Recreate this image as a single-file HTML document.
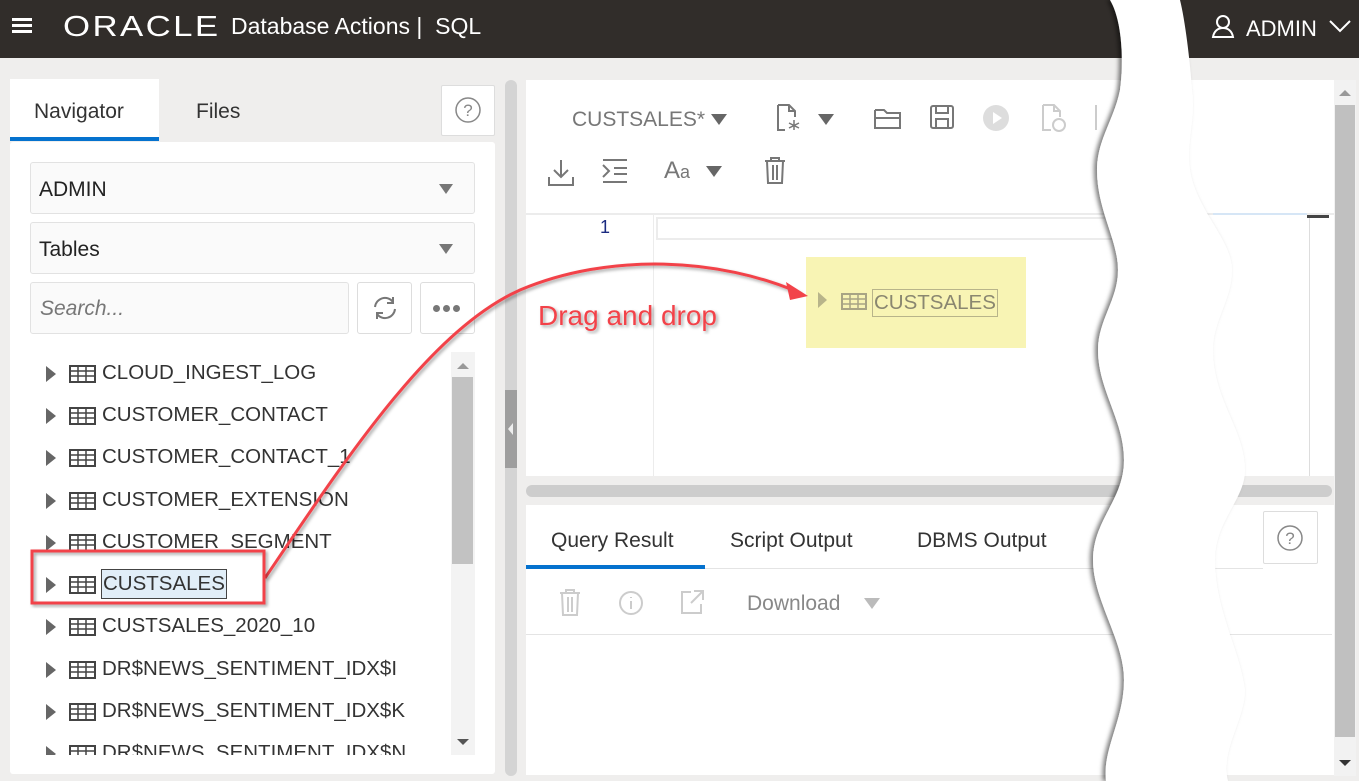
<!DOCTYPE html>
<html><head><meta charset="utf-8"><style>
*{margin:0;padding:0;box-sizing:border-box}
body{width:1359px;height:781px;overflow:hidden;background:#efeeed;font-family:"Liberation Sans",sans-serif;position:relative}
.abs{position:absolute}
.hdr{left:0;top:0;width:1359px;height:58px;background:#312d2a;color:#fff}
.box{background:#fafafa;border:1px solid #e2e2e2;border-radius:3px}
.row{position:absolute;left:44px;height:30px;font-size:20.5px;color:#333;white-space:nowrap}
.row .tri{position:absolute;left:2px;top:6px;width:0;height:0;border-left:10px solid #666;border-top:8px solid transparent;border-bottom:8px solid transparent}
.row .ic{position:absolute;left:25px;top:5px}
.row .t{position:absolute;left:58px;top:1px}
.tab{position:absolute;font-size:21px;color:#333}
</style></head><body>
<div class="abs hdr">
 <div class="abs" style="left:12px;top:18px;width:20px;height:3px;background:#fff;box-shadow:0 6px 0 #fff,0 12px 0 #fff"></div>
 <div class="abs" style="left:63px;top:11px;font-size:29px;letter-spacing:2px;transform:scaleX(1.2);transform-origin:left">ORACLE</div>
 <div class="abs" style="left:231px;top:13px;font-size:23px">Database Actions |&nbsp; SQL</div>
 <svg class="abs" style="left:1211px;top:14px" width="24" height="24" viewBox="0 0 24 24" fill="none" stroke="#fff" stroke-width="2"><circle cx="12" cy="8" r="6"/><path d="M2 23c1-6 5-9 10-9s9 3 10 9z"/></svg>
 <div class="abs" style="left:1246px;top:16px;font-size:22px">ADMIN</div>
 <svg class="abs" style="left:1328px;top:18px" width="24" height="16"><path d="M2 3l10 10 10-10" stroke="#fff" stroke-width="2" fill="none"/></svg>
</div>

<!-- left panel -->
<div class="abs" style="left:10px;top:79px;width:149px;height:62px;background:#fff"></div>
<div class="abs" style="left:10px;top:137px;width:149px;height:4px;background:#0572ce"></div>
<div class="tab" style="left:34px;top:100px">Navigator</div>
<div class="tab" style="left:196px;top:100px">Files</div>
<div class="abs" style="left:441px;top:85px;width:54px;height:51px;background:#fff;border:1px solid #ddd;border-radius:2px"></div>
<svg class="abs" style="left:454px;top:96px" width="28" height="28"><circle cx="14" cy="14" r="12" stroke="#888" stroke-width="1.5" fill="none"/><text x="14" y="20" font-size="17" text-anchor="middle" fill="#888" font-family="Liberation Sans">?</text></svg>
<div class="abs" style="left:10px;top:142px;width:485px;height:632px;background:#fff;border-radius:3px"></div>
<div class="abs box" style="left:30px;top:162px;width:445px;height:52px"></div>
<div class="abs" style="left:39px;top:178px;font-size:21px;color:#222">ADMIN</div>
<div class="abs" style="left:439px;top:184px;border-top:10px solid #777;border-left:7px solid transparent;border-right:7px solid transparent"></div>
<div class="abs box" style="left:30px;top:222px;width:445px;height:52px"></div>
<div class="abs" style="left:39px;top:238px;font-size:21px;color:#222">Tables</div>
<div class="abs" style="left:439px;top:244px;border-top:10px solid #777;border-left:7px solid transparent;border-right:7px solid transparent"></div>
<div class="abs box" style="left:30px;top:282px;width:319px;height:52px"></div>
<div class="abs" style="left:40px;top:297px;font-size:21px;color:#777;font-style:italic">Search...</div>
<div class="abs" style="left:357px;top:282px;width:55px;height:52px;background:#fff;border:1px solid #ddd;border-radius:3px"></div>
<svg class="abs" style="left:371px;top:295px" width="28" height="26" fill="none" stroke="#777" stroke-width="2"><path d="M4 12a10 10 0 0 1 18-5M24 14a10 10 0 0 1-18 5"/><path d="M22 2v6h-6M6 24v-6h6" /></svg>
<div class="abs" style="left:420px;top:282px;width:55px;height:52px;background:#fff;border:1px solid #ddd;border-radius:3px"></div>
<div class="abs" style="left:433px;top:305px;width:7px;height:7px;border-radius:50%;background:#777;box-shadow:10px 0 0 #777,20px 0 0 #777"></div>

<div class="abs" style="left:30px;top:352px;width:420px;height:403px;overflow:hidden">
<div style="position:relative;left:-30px;top:-349px">
<div class="row" style="top:357px"><span class="tri"></span><svg class="ic" width="27" height="18"><rect x="1" y="1" width="25" height="16" fill="none" stroke="#444" stroke-width="2"/><path d="M1 6h25M1 11h25M9 1v16M17 1v16" stroke="#444" stroke-width="1.5"/></svg><span class="t">CLOUD_INGEST_LOG</span></div>
<div class="row" style="top:399px"><span class="tri"></span><svg class="ic" width="27" height="18"><rect x="1" y="1" width="25" height="16" fill="none" stroke="#444" stroke-width="2"/><path d="M1 6h25M1 11h25M9 1v16M17 1v16" stroke="#444" stroke-width="1.5"/></svg><span class="t">CUSTOMER_CONTACT</span></div>
<div class="row" style="top:441px"><span class="tri"></span><svg class="ic" width="27" height="18"><rect x="1" y="1" width="25" height="16" fill="none" stroke="#444" stroke-width="2"/><path d="M1 6h25M1 11h25M9 1v16M17 1v16" stroke="#444" stroke-width="1.5"/></svg><span class="t">CUSTOMER_CONTACT_1</span></div>
<div class="row" style="top:484px"><span class="tri"></span><svg class="ic" width="27" height="18"><rect x="1" y="1" width="25" height="16" fill="none" stroke="#444" stroke-width="2"/><path d="M1 6h25M1 11h25M9 1v16M17 1v16" stroke="#444" stroke-width="1.5"/></svg><span class="t">CUSTOMER_EXTENSION</span></div>
<div class="row" style="top:526px"><span class="tri"></span><svg class="ic" width="27" height="18"><rect x="1" y="1" width="25" height="16" fill="none" stroke="#444" stroke-width="2"/><path d="M1 6h25M1 11h25M9 1v16M17 1v16" stroke="#444" stroke-width="1.5"/></svg><span class="t">CUSTOMER_SEGMENT</span></div>
<div class="row" style="top:568px"><span class="tri"></span><svg class="ic" width="27" height="18"><rect x="1" y="1" width="25" height="16" fill="none" stroke="#444" stroke-width="2"/><path d="M1 6h25M1 11h25M9 1v16M17 1v16" stroke="#444" stroke-width="1.5"/></svg><span class="t" style="left:57px;top:-2px;padding:2px 1px;background:#e1eef8;border:1px solid #444">CUSTSALES</span></div>
<div class="row" style="top:610px"><span class="tri"></span><svg class="ic" width="27" height="18"><rect x="1" y="1" width="25" height="16" fill="none" stroke="#444" stroke-width="2"/><path d="M1 6h25M1 11h25M9 1v16M17 1v16" stroke="#444" stroke-width="1.5"/></svg><span class="t">CUSTSALES_2020_10</span></div>
<div class="row" style="top:653px"><span class="tri"></span><svg class="ic" width="27" height="18"><rect x="1" y="1" width="25" height="16" fill="none" stroke="#444" stroke-width="2"/><path d="M1 6h25M1 11h25M9 1v16M17 1v16" stroke="#444" stroke-width="1.5"/></svg><span class="t">DR$NEWS_SENTIMENT_IDX$I</span></div>
<div class="row" style="top:695px"><span class="tri"></span><svg class="ic" width="27" height="18"><rect x="1" y="1" width="25" height="16" fill="none" stroke="#444" stroke-width="2"/><path d="M1 6h25M1 11h25M9 1v16M17 1v16" stroke="#444" stroke-width="1.5"/></svg><span class="t">DR$NEWS_SENTIMENT_IDX$K</span></div>
<div class="row" style="top:737px"><span class="tri"></span><svg class="ic" width="27" height="18"><rect x="1" y="1" width="25" height="16" fill="none" stroke="#444" stroke-width="2"/><path d="M1 6h25M1 11h25M9 1v16M17 1v16" stroke="#444" stroke-width="1.5"/></svg><span class="t">DR$NEWS_SENTIMENT_IDX$N</span></div>
</div></div>
<div class="abs" style="left:451px;top:352px;width:24px;height:403px;background:#f3f3f3"></div>
<div class="abs" style="left:452px;top:377px;width:21px;height:187px;background:#c2c2c2"></div>
<div class="abs" style="left:457px;top:363px;border-bottom:6px solid #999;border-left:6px solid transparent;border-right:6px solid transparent"></div>
<div class="abs" style="left:457px;top:739px;border-top:6px solid #555;border-left:6px solid transparent;border-right:6px solid transparent"></div>

<!-- splitter -->
<div class="abs" style="left:505px;top:80px;width:12px;height:696px;background:#d4d4d4;border-radius:6px"></div>
<div class="abs" style="left:505px;top:390px;width:12px;height:78px;background:#9e9e9e"></div>
<div class="abs" style="left:508px;top:423px;border-right:5px solid #eee;border-top:6px solid transparent;border-bottom:6px solid transparent"></div>

<!-- right editor panel -->
<div class="abs" style="left:526px;top:80px;width:808px;height:396px;background:#fff"></div>
<div class="abs" style="left:572px;top:108px;font-size:21px;color:#777">CUSTSALES*</div>
<div class="abs" style="left:711px;top:114px;border-top:11px solid #666;border-left:8px solid transparent;border-right:8px solid transparent"></div>
<svg class="abs" style="left:775px;top:103px" width="30" height="30" fill="none" stroke="#777" stroke-width="2"><path d="M3 2h11l6 6v6M14 2v6h6M3 2v25h7"/><path d="M19 17v10M14 20l10 5M24 20l-10 5" stroke-width="1.5"/></svg>
<div class="abs" style="left:818px;top:114px;border-top:11px solid #666;border-left:8px solid transparent;border-right:8px solid transparent"></div>
<svg class="abs" style="left:873px;top:106px" width="30" height="24" fill="none" stroke="#777" stroke-width="2"><path d="M2 4h9l3 3h13v5M2 4v18h25V12H2"/></svg>
<svg class="abs" style="left:929px;top:104px" width="26" height="26" fill="none" stroke="#777" stroke-width="2"><rect x="2" y="2" width="22" height="22" rx="2"/><path d="M7 2v7h12V2M7 24v-9h12v9"/></svg>
<svg class="abs" style="left:982px;top:104px" width="28" height="28"><circle cx="14" cy="14" r="13" fill="#ddd"/><path d="M11 8l9 6-9 6z" fill="#fff"/></svg>
<svg class="abs" style="left:1040px;top:103px" width="28" height="30" fill="none" stroke="#ccc" stroke-width="2"><path d="M3 2h11l6 6v6M14 2v6h6M3 2v25h8"/><circle cx="19" cy="22" r="6"/></svg>
<svg class="abs" style="left:1093px;top:103px" width="10" height="30" fill="none" stroke="#ccc" stroke-width="2"><path d="M3 2v25"/></svg>
<svg class="abs" style="left:546px;top:157px" width="30" height="30" fill="none" stroke="#777" stroke-width="2"><path d="M15 3v17M8 13l7 7 7-7M3 20v8h24v-8"/></svg>
<svg class="abs" style="left:600px;top:158px" width="28" height="26" fill="none" stroke="#777" stroke-width="2"><path d="M3 2h24M3 24h24M14 10h13M14 16h13M3 7l6 6-6 6"/></svg>
<div class="abs" style="left:664px;top:157px;font-size:24px;color:#777">A<span style="font-size:18px">a</span></div>
<div class="abs" style="left:706px;top:166px;border-top:11px solid #666;border-left:8px solid transparent;border-right:8px solid transparent"></div>
<svg class="abs" style="left:763px;top:156px" width="24" height="30" fill="none" stroke="#777" stroke-width="2"><path d="M2 5h20M8 5V2h8v3M4 5l1 22h14l1-22M10 9v15M14 9v15"/></svg>
<div class="abs" style="left:526px;top:213px;width:808px;height:2px;background:#ececec"></div>
<div class="abs" style="left:1213px;top:213px;width:94px;height:2px;background:#d6e6f6"></div>
<div class="abs" style="left:653px;top:215px;width:1px;height:261px;background:#ececec"></div>
<div class="abs" style="left:600px;top:217px;font-size:18px;color:#1a2a80">1</div>
<div class="abs" style="left:656px;top:217px;width:550px;height:23px;border:2px solid #ececec"></div>
<div class="abs" style="left:1307px;top:215px;width:22px;height:3px;background:#444"></div>
<div class="abs" style="left:1309px;top:218px;width:1px;height:258px;background:#ddd"></div>

<!-- drop target -->
<div class="abs" style="left:806px;top:257px;width:220px;height:91px;background:#f8f4b4"></div>
<div class="abs" style="left:818px;top:292px;border-left:9px solid #b8b48a;border-top:8px solid transparent;border-bottom:8px solid transparent"></div>
<svg class="abs" style="left:841px;top:293px" width="26" height="18"><rect x="1" y="1" width="24" height="15" fill="none" stroke="#a8a484" stroke-width="2"/><path d="M1 6h24M1 11h24M9 1v15M17 1v15" stroke="#a8a484" stroke-width="1.5"/></svg>
<div class="abs" style="left:872px;top:289px;padding:1px 1px;border:1px solid #b8b48a;font-size:20.5px;color:#8a8770">CUSTSALES</div>

<!-- h splitter -->
<div class="abs" style="left:526px;top:485px;width:806px;height:12px;background:#cdcdcd;border-radius:6px"></div>

<!-- bottom panel -->
<div class="abs" style="left:526px;top:505px;width:808px;height:270px;background:#fff"></div>
<div class="tab" style="left:551px;top:529px">Query Result</div>
<div class="tab" style="left:730px;top:529px">Script Output</div>
<div class="tab" style="left:917px;top:529px">DBMS Output</div>
<div class="abs" style="left:526px;top:565px;width:179px;height:4px;background:#0572ce"></div>
<div class="abs" style="left:705px;top:568px;width:558px;height:1px;background:#e4e4e4"></div>
<div class="abs" style="left:1263px;top:511px;width:55px;height:53px;border:1px solid #ddd;border-radius:2px"></div>
<svg class="abs" style="left:1276px;top:524px" width="28" height="28"><circle cx="14" cy="14" r="12" stroke="#888" stroke-width="1.5" fill="none"/><text x="14" y="20" font-size="17" text-anchor="middle" fill="#888" font-family="Liberation Sans">?</text></svg>
<svg class="abs" style="left:558px;top:588px" width="24" height="30" fill="none" stroke="#ccc" stroke-width="2"><path d="M2 5h20M8 5V2h8v3M4 5l1 22h14l1-22M10 9v15M14 9v15"/></svg>
<svg class="abs" style="left:618px;top:590px" width="26" height="26" fill="none" stroke="#ccc" stroke-width="2"><circle cx="13" cy="13" r="11"/><path d="M13 11v8M13 7v1"/></svg>
<svg class="abs" style="left:679px;top:589px" width="26" height="26" fill="none" stroke="#ccc" stroke-width="2"><path d="M12 3H3v21h19v-9M15 2h9v9M24 2L12 14"/></svg>
<div class="abs" style="left:747px;top:592px;font-size:21px;color:#888">Download</div>
<div class="abs" style="left:864px;top:598px;border-top:11px solid #bbb;border-left:8px solid transparent;border-right:8px solid transparent"></div>
<div class="abs" style="left:526px;top:634px;width:806px;height:1px;background:#e4e4e4"></div>

<!-- right scrollbar -->
<div class="abs" style="left:1334px;top:80px;width:22px;height:696px;background:#f2f2f2"></div>
<div class="abs" style="left:1335px;top:105px;width:20px;height:632px;background:#c0c0c0"></div>
<div class="abs" style="left:1339px;top:90px;border-bottom:6px solid #999;border-left:6px solid transparent;border-right:6px solid transparent"></div>
<div class="abs" style="left:1339px;top:760px;border-top:6px solid #333;border-left:6px solid transparent;border-right:6px solid transparent"></div>

<!-- torn wavy band -->
<svg class="abs" style="left:0;top:0" width="1359" height="781">
<defs><filter id="sh" x="-20%" y="-5%" width="140%" height="110%"><feDropShadow dx="-3" dy="0" stdDeviation="2" flood-color="#000" flood-opacity="0.5"/></filter>
<filter id="ts"><feDropShadow dx="2" dy="2" stdDeviation="1.5" flood-color="#000" flood-opacity="0.35"/></filter></defs>
<path filter="url(#sh)" fill="#fff" d="M1110 0 C1122 20 1124 60 1120 90 C1114 120 1097 140 1097 170 C1097 210 1118 240 1118 270 C1118 300 1098 320 1098 350 C1098 390 1124 420 1124 460 C1124 500 1093 520 1093 560 C1093 600 1124 640 1124 680 C1124 720 1102 750 1106 781 L1228 781 C1220 750 1245 720 1245 690 C1240 650 1215 610 1215 560 C1215 520 1245 500 1245 470 C1245 430 1213 400 1213 350 C1213 320 1232 300 1232 270 C1232 240 1196 210 1190 170 C1186 140 1196 120 1192 90 C1190 60 1185 20 1180 0 Z"/>
<path d="M265 578 C345 460 430 330 520 290 C610 252 720 258 800 293" fill="none" stroke="#f2434a" stroke-width="3" filter="url(#ts)"/>
<path d="M808 296 L786 282 L790 300 Z" fill="#f2434a"/>
<rect x="32" y="551" width="232" height="52" fill="none" stroke="#f2434a" stroke-width="3" filter="url(#ts)"/>
<text x="538" y="325" font-size="28" fill="#f2434a" font-family="Liberation Sans" filter="url(#ts)">Drag and drop</text>
</svg>
</body></html>
